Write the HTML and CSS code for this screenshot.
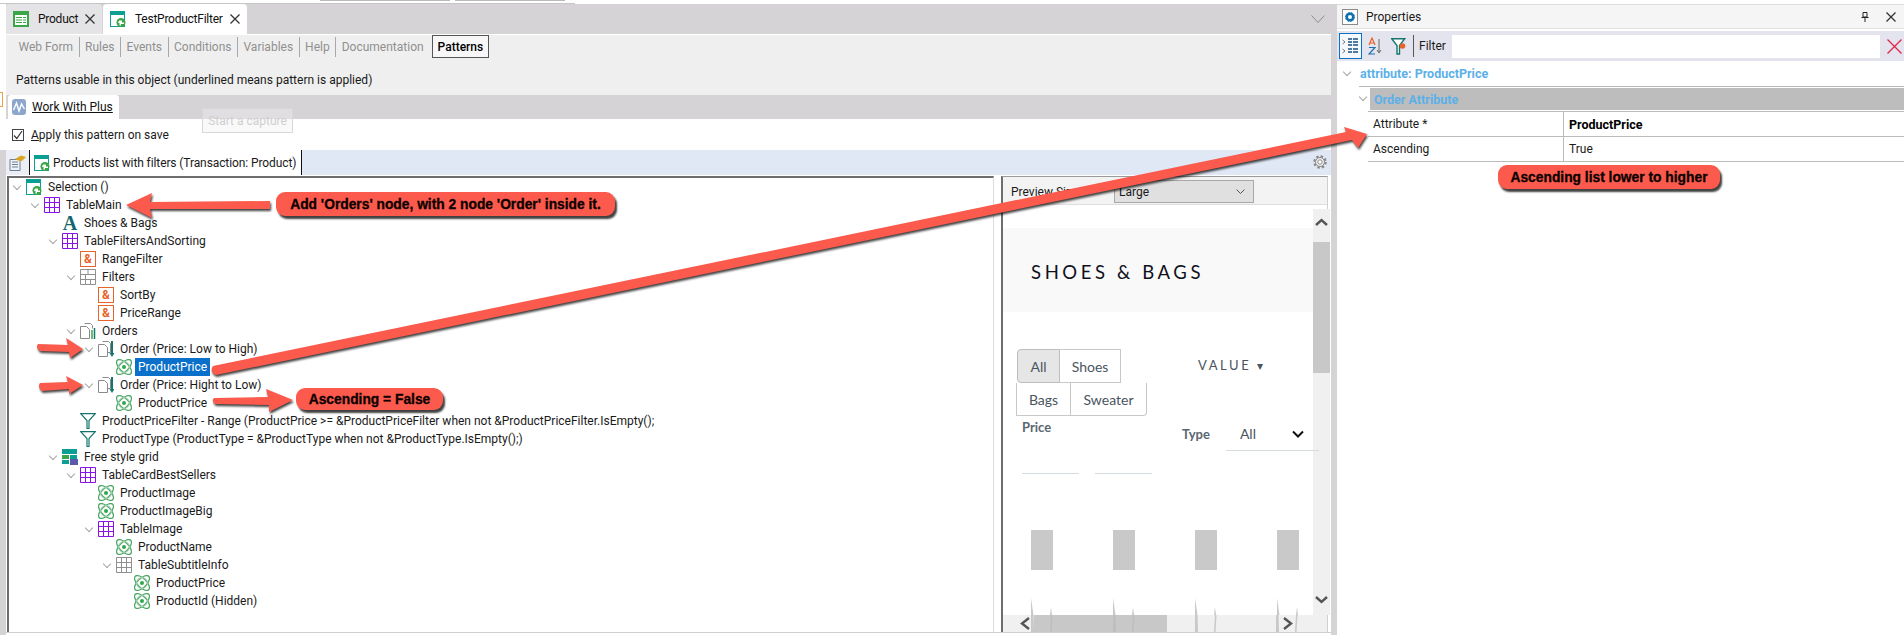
FILE: index.html
```html
<!DOCTYPE html>
<html lang="en">
<head>
    <meta charset="UTF-8">
    <title>TestProductFilter - Patterns</title>
    <link rel="stylesheet" href="styles.css">
</head>
<body>

<svg class="defs" width="0" height="0">
    <symbol id="i-table" viewBox="0 0 16 16"><path d="M.5.5h15v15H.5zM5.5.5v15M10.5.5v15M.5 5.5h15M.5 10.5h15" fill="none" stroke="currentColor"/></symbol>
    <symbol id="i-filters" viewBox="0 0 16 16"><path d="M.5.5h15v15H.5zM.5 5.5h15M.5 10.5h15M8 .5v5M5.5 5.5v10M10.5 10.5v5" fill="none" stroke="#8f8f8f"/></symbol>
    <symbol id="i-atom" viewBox="0 0 16 16">
        <g fill="none" stroke="#4ea866" stroke-width="1.3">
            <ellipse cx="8" cy="8" rx="9.500" ry="4.500" transform="rotate(45 8 8)"/>
            <ellipse cx="8" cy="8" rx="9.500" ry="4.500" transform="rotate(-45 8 8)"/>
            <circle cx="8" cy="8" r="5.500" stroke="#9ccfae" stroke-width="1"/>
        </g>
        <circle cx="8" cy="8" r="2" fill="#2fa84a"/>
    </symbol>
    <symbol id="i-funnel" viewBox="0 0 16 16"><path d="M.7.7h14.6L9 7.5V15.5H7V7.5z" fill="#fff" stroke="#14766c" stroke-width="1.2"/></symbol>
    <symbol id="i-web" viewBox="0 0 16 16">
        <rect x=".5" y=".5" width="14" height="15" fill="#fff" stroke="#0a9f92"/>
        <rect x="0" y="0" width="15" height="4" fill="#0a9f92"/>
        <circle cx="11" cy="11.5" r="4.5" fill="#3aa648"/>
        <path d="M9 9.5h3v2h2v1.5h-3v1.5H9.500v-2.500H8z" fill="#fff"/>
    </symbol>
    <symbol id="i-order" viewBox="0 0 16 16">
        <path d="M4.500.5h6l2 2v9h-4" fill="#fff" stroke="#8a8a8a"/>
        <path d="M.5 3.500h6l3 3v9h-9z" fill="#fff" stroke="#8a8a8a"/>
        <path d="M14 0v13" stroke="#14766c" stroke-width="2"/>
        <path d="M11.500 12h5l-2.500 4z" fill="#14766c"/>
    </symbol>
    <symbol id="i-orders" viewBox="0 0 16 16">
        <path d="M4.500.5h6l2 2v3" fill="#fff" stroke="#8a8a8a"/>
        <path d="M.5 3.500h6l3 3v9h-9z" fill="#fff" stroke="#8a8a8a"/>
        <path d="M12 7v9" stroke="#3aa648" stroke-width="1.500"/>
        <path d="M14.500 5v11" stroke="#14766c" stroke-width="1.500"/>
    </symbol>
    <symbol id="i-close" viewBox="0 0 10 10"><path d="M.5.5l9 9M9.500.5l-9 9" fill="none" stroke="#333" stroke-width="1.300"/></symbol>
</svg>

<div class="topstrip"></div>

<div class="app">
    <div class="main">
        <div class="tabbar">
            <div class="doc-tab inactive">
                <svg class="icon" viewBox="0 0 16 16"><rect width="16" height="16" fill="#3aa648"/><rect x="2" y="4" width="12" height="10" fill="#fff"/><path d="M3 6h6v1H3zM3 8.500h6v1H3zM3 11h6v1H3zM10 6h3v1h-3zM10 8.500h3v1h-3zM10 11h3v1h-3z" fill="#3aa648"/></svg>
                <span class="doc-name">Product</span>
                <svg class="close"><use href="#i-close"/></svg>
            </div>
            <div class="doc-tab active">
                <svg class="icon"><use href="#i-web"/></svg>
                <span class="doc-name">TestProductFilter</span>
                <svg class="close"><use href="#i-close"/></svg>
            </div>
            <svg class="tabbar-chevron" width="14" height="8" viewBox="0 0 14 8"><path d="M.5.5 7 7.500 13.500.5" fill="none" stroke="#8c8c8c"/></svg>
        </div>

        <div class="toolrow">
            <div class="subtabs">
                <span class="subtab">Web Form</span>
                <span class="subtab">Rules</span>
                <span class="subtab">Events</span>
                <span class="subtab">Conditions</span>
                <span class="subtab">Variables</span>
                <span class="subtab">Help</span>
                <span class="subtab last">Documentation</span>
                <span class="subtab current">Patterns</span>
            </div>
            <p class="usable">Patterns usable in this object (underlined means pattern is applied)</p>
        </div>

        <div class="patternbar">
            <div class="pattern-tab">
                <svg class="wave" width="14" height="16" viewBox="0 0 14 16"><rect width="14" height="16" rx="3" fill="#8ca6cc"/><path d="M1.500 11 4.500 4l2.500 8 2.500-7 3 5" fill="none" stroke="#fff" stroke-width="1.400"/></svg>
                <span class="pattern-name">Work With Plus</span>
            </div>
        </div>

        <div class="applyrow">
            <span class="checkbox"><svg width="10" height="10" viewBox="0 0 10 10"><path d="M1 5.500 3.800 8.500 9 1" fill="none" stroke="#333" stroke-width="1.200"/></svg></span>
            <span><u>A</u>pply this pattern on save</span>
        </div>

        <div class="lower">
            <div class="instancebar">
                <div class="instance-tool">
                    <svg width="17" height="16" viewBox="0 0 17 16"><path d="M1 4.500h10v11H1z" fill="#eef2f8" stroke="#6f7f95"/><path d="M3 7h6M3 9.500h6M3 12h6" stroke="#6f7f95"/><path d="M6 4 12 .5l5 1.500-4 4-4-.5z" fill="#d9a520"/></svg>
                </div>
                <div class="instance-tab">
                    <svg class="icon"><use href="#i-web"/></svg>
                    <span class="instance-name">Products list with filters (Transaction: Product)</span>
                </div>
                <svg class="gear" width="16" height="16" viewBox="0 0 16 16"><circle cx="8" cy="8" r="5.500" fill="none" stroke="#8a8a8a" stroke-width="2.600" stroke-dasharray="2.400 1.900"/><circle cx="8" cy="8" r="4.500" fill="#eee" stroke="#8a8a8a"/><circle cx="8" cy="8" r="2.200" fill="#fff" stroke="#8a8a8a"/></svg>
            </div>

            <div class="workspace">
                <div class="tree">
                    <div class="row l0"><span class="chev"></span><svg class="icon"><use href="#i-web"/></svg><span class="label">Selection ()</span></div>
                    <div class="row l1"><span class="chev"></span><svg class="icon purple"><use href="#i-table"/></svg><span class="label">TableMain</span></div>
                    <div class="row l2"><span class="chev none"></span><span class="icon font-a">A</span><span class="label">Shoes &amp; Bags</span></div>
                    <div class="row l2"><span class="chev"></span><svg class="icon purple"><use href="#i-table"/></svg><span class="label">TableFiltersAndSorting</span></div>
                    <div class="row l3"><span class="chev none"></span><span class="icon amp">&amp;</span><span class="label">RangeFilter</span></div>
                    <div class="row l3"><span class="chev"></span><svg class="icon"><use href="#i-filters"/></svg><span class="label">Filters</span></div>
                    <div class="row l4"><span class="chev none"></span><span class="icon amp">&amp;</span><span class="label">SortBy</span></div>
                    <div class="row l4"><span class="chev none"></span><span class="icon amp">&amp;</span><span class="label">PriceRange</span></div>
                    <div class="row l3"><span class="chev"></span><svg class="icon"><use href="#i-orders"/></svg><span class="label">Orders</span></div>
                    <div class="row l4"><span class="chev"></span><svg class="icon"><use href="#i-order"/></svg><span class="label">Order (Price: Low to High)</span></div>
                    <div class="row l5"><span class="chev none"></span><svg class="icon"><use href="#i-atom"/></svg><span class="label selected">ProductPrice</span></div>
                    <div class="row l4"><span class="chev"></span><svg class="icon"><use href="#i-order"/></svg><span class="label">Order (Price: Hight to Low)</span></div>
                    <div class="row l5"><span class="chev none"></span><svg class="icon"><use href="#i-atom"/></svg><span class="label">ProductPrice</span></div>
                    <div class="row l3"><span class="chev none"></span><svg class="icon"><use href="#i-funnel"/></svg><span class="label">ProductPriceFilter - Range (ProductPrice &gt;= &amp;ProductPriceFilter when not &amp;ProductPriceFilter.IsEmpty();</span></div>
                    <div class="row l3"><span class="chev none"></span><svg class="icon"><use href="#i-funnel"/></svg><span class="label">ProductType (ProductType = &amp;ProductType when not &amp;ProductType.IsEmpty();)</span></div>
                    <div class="row l2"><span class="chev"></span>
                        <svg class="icon" viewBox="0 0 16 16"><rect width="15" height="5" fill="#0a9f92"/><rect y="6" width="7" height="4" fill="#3aa648"/><rect x="8" y="6" width="7" height="4" fill="#0a9f92"/><rect y="11" width="7" height="4" fill="#0a9f92"/><rect x="8" y="10" width="8" height="6" fill="#5a5aa8"/></svg>
                        <span class="label">Free style grid</span></div>
                    <div class="row l3"><span class="chev"></span><svg class="icon purple"><use href="#i-table"/></svg><span class="label">TableCardBestSellers</span></div>
                    <div class="row l4"><span class="chev none"></span><svg class="icon"><use href="#i-atom"/></svg><span class="label">ProductImage</span></div>
                    <div class="row l4"><span class="chev none"></span><svg class="icon"><use href="#i-atom"/></svg><span class="label">ProductImageBig</span></div>
                    <div class="row l4"><span class="chev"></span><svg class="icon purple"><use href="#i-table"/></svg><span class="label">TableImage</span></div>
                    <div class="row l5"><span class="chev none"></span><svg class="icon"><use href="#i-atom"/></svg><span class="label">ProductName</span></div>
                    <div class="row l5"><span class="chev"></span><svg class="icon gray"><use href="#i-table"/></svg><span class="label">TableSubtitleInfo</span></div>
                    <div class="row l6"><span class="chev none"></span><svg class="icon"><use href="#i-atom"/></svg><span class="label">ProductPrice</span></div>
                    <div class="row l6"><span class="chev none"></span><svg class="icon"><use href="#i-atom"/></svg><span class="label">ProductId (Hidden)</span></div>
                </div>

                <div class="preview">
                    <div class="preview-tools">
                        <span class="preview-size">Preview Size:</span>
                        <div class="size-select"><span>Large</span>
                            <svg width="9" height="6" viewBox="0 0 9 6"><path d="M.5.5 4.500 4.500 8.500.5" fill="none" stroke="#555"/></svg>
                        </div>
                    </div>
                    <div class="preview-body">
                        <div class="page">
                            <div class="hero">SHOES &amp; BAGS</div>
                            <div class="filter-top">
                                <div class="seg">
                                    <div class="seg-row">
                                        <span class="seg-btn on">All</span>
                                        <span class="seg-btn shoes">Shoes</span>
                                    </div>
                                    <div class="seg-row second">
                                        <span class="seg-btn bags">Bags</span>
                                        <span class="seg-btn sweater">Sweater</span>
                                    </div>
                                </div>
                                <div class="value">VALUE <span class="value-caret">▾</span></div>
                            </div>
                            <div class="filter-bottom">
                                <div class="price">
                                    <div class="price-label">Price</div>
                                    <div class="price-inputs"><span class="price-input"></span><span class="price-input"></span></div>
                                </div>
                                <div class="type">
                                    <span class="type-label">Type</span>
                                    <div class="type-select">
                                        <span>All</span>
                                        <svg width="12" height="8" viewBox="0 0 12 8"><path d="M1 1.500 6 6.500 11 1.500" fill="none" stroke="#111" stroke-width="2"/></svg>
                                    </div>
                                </div>
                            </div>
                            <div class="thumbs">
                                <div class="thumb-col"><span class="thumb"></span><svg class="sliver" width="22" height="17" viewBox="0 0 22 17"><path d="M0 0 2.500 17H0zM20 9l1 8h-2z" fill="#c9c9c9"/></svg></div>
                                <div class="thumb-col"><span class="thumb"></span><svg class="sliver" width="22" height="17" viewBox="0 0 22 17"><path d="M0 0 2.500 17H0zM20 9l1 8h-2z" fill="#c9c9c9"/></svg></div>
                                <div class="thumb-col"><span class="thumb"></span><svg class="sliver" width="22" height="17" viewBox="0 0 22 17"><path d="M0 0 2.500 17H0zM20 9l1 8h-2z" fill="#c9c9c9"/></svg></div>
                                <div class="thumb-col"><span class="thumb"></span><svg class="sliver" width="22" height="17" viewBox="0 0 22 17"><path d="M0 0 2.500 17H0zM20 9l1 8h-2z" fill="#c9c9c9"/></svg></div>
                            </div>
                        </div>
                        <div class="vscroll">
                            <svg class="scroll-btn" width="17" height="24" viewBox="0 0 17 24"><path d="M3 16 8.500 11 14 16" fill="none" stroke="#555" stroke-width="2.400"/></svg>
                            <div class="vthumb"></div>
                            <svg class="scroll-btn end" width="17" height="24" viewBox="0 0 17 24"><path d="M3 6 8.500 11 14 6" fill="none" stroke="#555" stroke-width="2.400"/></svg>
                        </div>
                    </div>
                    <div class="hscroll">
                        <svg class="scroll-arrow" width="17" height="17" viewBox="0 0 17 17"><path d="M13 3 6 8.500 13 14" fill="none" stroke="#555" stroke-width="2.400"/></svg>
                        <div class="hthumb"></div>
                        <svg class="scroll-arrow end" width="17" height="17" viewBox="0 0 17 17"><path d="M4 3 11 8.500 4 14" fill="none" stroke="#555" stroke-width="2.400"/></svg>
                    </div>
                </div>
            </div>
        </div>
    </div>

    <div class="props">
        <div class="props-head">
            <span class="props-icon"><svg width="10" height="10" viewBox="0 0 10 10"><circle cx="5" cy="5" r="3.300" fill="none" stroke="#0f6fb0" stroke-width="2.600"/><circle cx="5" cy="5" r="4.600" fill="none" stroke="#0f6fb0" stroke-dasharray="1.400 1.400"/></svg></span>
            <span class="props-title">Properties</span>
            <svg class="pin" width="8" height="10" viewBox="0 0 8 10"><path d="M2 .5h4v4.500H2zM.5 5.500h7M4 5.500V10" fill="none" stroke="#222"/></svg>
            <svg class="props-close"><use href="#i-close"/></svg>
        </div>
        <div class="props-tools">
            <span class="tool-btn on">
                <svg width="17" height="18" viewBox="0 0 17 18"><path d="M.5 3 3 5 .5 7M.5 12 3 14 .5 16" fill="none" stroke="#777"/><path d="M6 2h4M11 2h5M6 5h4M11 5h5M6 8h4M11 8h5M6 12h4M11 12h5M6 15h4M11 15h5" stroke="#1a4f84" stroke-width="1.600"/></svg>
            </span>
            <span class="tool-btn">
                <svg width="14" height="18" viewBox="0 0 14 18"><path d="M1 8 4 1l3 7M2 6h4" fill="none" stroke="#e8632a" stroke-width="1.200"/><path d="M1 10.500h6l-6 6.500h6" fill="none" stroke="#1a6fb0" stroke-width="1.200"/><path d="M11 2v13M9 13l2 3 2-3" fill="none" stroke="#666"/></svg>
            </span>
            <span class="tool-btn">
                <svg width="16" height="17" viewBox="0 0 16 17"><path d="M.7.7h13L8.500 7.500V16H6V7.500z" fill="#fff" stroke="#14766c" stroke-width="1.400"/><circle cx="11.500" cy="8" r="2.800" fill="#e8632a"/></svg>
            </span>
            <span class="tool-sep"></span>
            <span class="filter-label">Filter</span>
            <span class="filter-input"></span>
            <svg class="filter-clear" width="15" height="15" viewBox="0 0 15 15"><path d="M.5.5 14.500 14.500M14.500.5.500 14.500" stroke="#e0244a" stroke-width="1.300"/></svg>
        </div>
        <div class="attr-head"><span class="chev"></span><span class="attr-title">attribute: ProductPrice</span></div>
        <div class="group-head"><span class="chev"></span><span class="group-title">Order Attribute</span></div>
        <div class="prop-table">
            <div class="prop-row"><span class="prop-name">Attribute *</span><span class="prop-value strong">ProductPrice</span></div>
            <div class="prop-row"><span class="prop-name">Ascending</span><span class="prop-value">True</span></div>
        </div>
    </div>
</div>

<!-- annotations pasted over the screenshot -->
<span class="edge-mark"></span>
<div class="capture">Start a capture</div>
<svg class="arrows" width="1904" height="635" viewBox="0 0 1904 635">
    <path d="M270 201 L150 202 L152 193 L126 205 L152 218 L150 209 L270 209 Z"/>
    <path d="M213 366 L1346 132 L1344 127 L1367 134 L1358 148 L1352 140 L216 375 Q209 372 213 366 Z"/>
    <path d="M38 344 L68 345 L66 338 L83 349 L70 358 L69 352 L40 351 Q35 348 38 344 Z"/>
    <path d="M40 383 L68 382 L66 376 L83 385 L69 394 L69 389 L42 391 Q37 387 40 383 Z"/>
    <path d="M214 398 L268 397 L266 389 L293 400 L269 412 L269 405 L215 404 Q211 401 214 398 Z"/>
</svg>
<svg class="scroll-slivers" width="290" height="17" viewBox="0 0 290 17">
    <path d="M0 0h2.500L3 17H0zM20 0h1.500l-1 17H19zM82 0h2.500L85 17h-3zM102 0h1.500l-1 17H101zM164 0h2.500l.5 17h-3zM184 0h1.500l-1 17H183zM245 0h2.500l.5 17h-3zM265 0h1.500l-1 17H264z" fill="#bbb" opacity=".75"/>
</svg>
<div class="callout c-orders">Add 'Orders' node, with 2 node 'Order' inside it.</div>
<div class="callout c-false">Ascending = False</div>
<div class="callout c-list">Ascending list lower to higher</div>

</body>
</html>
```

FILE: styles.css
```css
html, body {
    margin: 0;
    padding: 0;
}

body {
    position: relative;
    width: 1904px;
    height: 635px;
    overflow: hidden;
    background-color: #ffffff;
    font-family: Roboto, "Noto Sans", sans-serif;
    font-size: 12px;
    color: #1a1a1a;
}

.defs {
    position: absolute;
}

/* leftovers of the window behind, top edge of the capture */
.topstrip {
    height: 4px;
    background-image:
        linear-gradient(#b9b9b9, #b9b9b9),
        linear-gradient(#b9b9b9, #b9b9b9),
        linear-gradient(#c6c6c6, #c6c6c6);
    background-size: 130px 1px, 110px 1px, 575px 1px;
    background-position: 320px 0, 455px 0, 0 3px;
    background-repeat: no-repeat;
}

.app {
    display: flex;
    height: 631px;
}

.main {
    width: 1331px;
    flex: none;
    display: flex;
    flex-direction: column;
}

.icon {
    width: 16px;
    height: 16px;
    flex: none;
    display: block;
}

/* document tabs */
.tabbar {
    height: 30px;
    margin-left: 6px;
    display: flex;
    align-items: stretch;
    gap: 1px;
    background-color: #d5d3d6;
}

.doc-tab {
    display: flex;
    align-items: center;
    padding-left: 7px;
    border-radius: 4px 4px 0 0;
    box-sizing: border-box;
}

.doc-tab.inactive {
    width: 96px;
    background-color: #e4e3e5;
}

.doc-tab.active {
    width: 144px;
    background-color: #ffffff;
}

.doc-name {
    margin-left: 9px;
    color: #111;
    letter-spacing: -0.25px;
}

.close {
    width: 10px;
    height: 10px;
    margin-left: auto;
    margin-right: 7px;
}

.tabbar-chevron {
    margin: 11px 6px 0 auto;
}

/* object parts */
.toolrow {
    height: 61px;
    margin-left: 6px;
    background-color: #efefef;
    border-top: 1px solid #ffffff;
    box-sizing: border-box;
}

.subtabs {
    display: flex;
    align-items: stretch;
    height: 23px;
    padding-left: 7px;
}

.subtab {
    display: flex;
    align-items: center;
    padding: 0 5.5px;
    color: #8f8f8f;
    border-right: 1px solid #a8a8a8;
    margin: 2px 0 1px;
}

.subtab.last {
    border-right: none;
    padding-right: 8px;
}

.subtab.current {
    margin: 0;
    color: #000;
    font-weight: 500;
    border: 1px solid #555;
    padding: 0 5px;
    background-color: #f7f7f7;
}

.usable {
    margin: 14px 0 0 10px;
    line-height: 16px;
}

.patternbar {
    height: 24px;
    margin-left: 6px;
    background-color: #d5d3d6;
}

.pattern-tab {
    width: 111px;
    height: 24px;
    margin-left: 2px;
    display: flex;
    align-items: center;
    gap: 6px;
    padding-left: 4px;
    background-color: #ffffff;
    border-radius: 3px 3px 0 0;
    box-sizing: border-box;
}

.pattern-name {
    text-decoration: underline;
    color: #111;
}

.applyrow {
    height: 31px;
    margin-left: 12px;
    display: flex;
    align-items: center;
    gap: 7px;
}

.checkbox {
    width: 12px;
    height: 12px;
    border: 1px solid #444;
    box-sizing: border-box;
    display: flex;
    align-items: center;
    justify-content: center;
}

.lower {
    flex: 1;
    min-height: 0;
    border-left: 6px solid #d5d3d6;
    display: flex;
    flex-direction: column;
}

.instancebar {
    height: 25px;
    flex: none;
    display: flex;
    align-items: stretch;
    background-color: #e1e8f5;
}

.instance-tool {
    width: 24px;
    display: flex;
    align-items: center;
    justify-content: center;
    background-color: #ebeef4;
    border-right: 1px solid #111;
    box-sizing: border-box;
}

.instance-tab {
    width: 272px;
    display: flex;
    align-items: center;
    gap: 3px;
    padding-left: 4px;
    background-color: #ffffff;
    border-right: 1px solid #111;
    box-sizing: border-box;
}

.instance-name {
    letter-spacing: -0.1px;
}

.gear {
    margin: 4px 3px 0 auto;
}

.workspace {
    flex: 1;
    min-height: 0;
    display: flex;
    gap: 7px;
    padding-top: 1px;
    padding-right: 3px;
    border-bottom: 1px solid #cfcfcf;
    margin-bottom: 2px;
}

/* pattern tree */
.tree {
    width: 987px;
    flex: none;
    margin-left: 1px;
    box-sizing: border-box;
    border-top: 2px solid #6e6e6e;
    border-left: 2px solid #6e6e6e;
    border-right: 1px solid #dcdcdc;
}

.row {
    display: flex;
    align-items: center;
    height: 18px;
    white-space: nowrap;
}

.l0 { padding-left: 4px; }
.l1 { padding-left: 22px; }
.l2 { padding-left: 40px; }
.l3 { padding-left: 58px; }
.l4 { padding-left: 76px; }
.l5 { padding-left: 94px; }
.l6 { padding-left: 112px; }

.chev {
    width: 9px;
    height: 9px;
    flex: none;
    margin-right: 4px;
    position: relative;
}

.chev::after {
    content: "";
    position: absolute;
    left: 1px;
    top: 0;
    width: 5px;
    height: 5px;
    border-right: 1px solid #a6a6a6;
    border-bottom: 1px solid #a6a6a6;
    transform: rotate(45deg);
}

.chev.none::after {
    display: none;
}

.label {
    margin-left: 4px;
    padding: 0 2px;
    line-height: 18px;
}

.label.selected {
    margin-left: 3px;
    padding: 0 3px;
    background-color: #0a70c9;
    color: #ffffff;
}

.purple { color: #8a12e8; }
.gray { color: #8f8f8f; }

.font-a {
    font-family: "Liberation Serif", serif;
    font-weight: bold;
    font-size: 20px;
    line-height: 16px;
    color: #14666c;
    text-align: center;
}

.amp {
    border: 1px solid #e8632a;
    box-sizing: border-box;
    color: #e8632a;
    font-weight: bold;
    font-size: 12px;
    line-height: 14px;
    text-align: center;
}

/* preview */
.preview {
    flex: 1;
    min-width: 0;
    display: flex;
    flex-direction: column;
    border-top: 1px solid #9a9a9a;
    border-left: 2px solid #6e6e6e;
    border-right: 1px solid #cfcfcf;
    box-sizing: border-box;
}

.preview-tools {
    height: 28px;
    flex: none;
    display: flex;
    align-items: center;
    background-color: #f3f3f3;
    border-bottom: 1px solid #dedede;
    box-sizing: border-box;
    padding: 2px 0 0 8px;
}

.preview-size {
    width: 103px;
}

.size-select {
    width: 140px;
    height: 23px;
    display: flex;
    align-items: center;
    justify-content: space-between;
    padding: 0 8px 0 4px;
    background-color: #e0e0e0;
    border: 1px solid #a8a8a8;
    box-sizing: border-box;
}

.preview-body {
    flex: 1;
    min-height: 0;
    display: flex;
    background-color: #ffffff;
}

.page {
    width: 310px;
    flex: none;
    font-family: Lato, "Noto Sans", sans-serif;
    color: #4a5560;
}

.hero {
    height: 84px;
    margin-top: 23px;
    padding: 3px 0 0 28px;
    box-sizing: border-box;
    display: flex;
    align-items: center;
    background-color: #f9f9f9;
    color: #10101c;
    font-size: 18.5px;
    letter-spacing: 3.6px;
}

.filter-top {
    display: flex;
    height: 68px;
    margin-top: 37px;
}

.seg {
    width: 181px;
    flex: none;
    padding-left: 13px;
    box-sizing: border-box;
    font-size: 14px;
}

.seg-row {
    display: flex;
    height: 34px;
    margin-left: 1px;
}

.seg-row.second {
    height: 33px;
    margin-left: 0;
}

.seg-btn {
    display: flex;
    align-items: center;
    justify-content: center;
    box-sizing: border-box;
    border: 1px solid #c8c8c8;
}

.seg-btn.on {
    width: 43px;
    background-color: #e6e6e6;
    border-radius: 4px 0 0 4px;
    border-color: #bdbdbd;
}

.shoes {
    width: 61px;
    border-left: none;
}

.bags {
    width: 55px;
    border-top: none;
}

.sweater {
    width: 76px;
    border-top: none;
    border-left: none;
    border-radius: 0 0 4px 0;
}

.value {
    padding-top: 8px;
    padding-left: 14px;
    font-size: 13px;
    letter-spacing: 2.600px;
}

.value-caret {
    letter-spacing: 0;
    font-size: 12px;
}

.filter-bottom {
    display: flex;
    height: 74px;
}

.price {
    width: 179px;
    flex: none;
    padding-left: 19px;
    box-sizing: border-box;
}

.price-label,
.type-label {
    font-weight: bold;
    font-size: 13px;
    color: #5a6672;
}

.price-label {
    margin-top: 2px;
    line-height: 16px;
}

.price-inputs {
    display: flex;
    gap: 16px;
    margin-top: 38px;
}

.price-input {
    width: 57px;
    border-bottom: 1px solid #d5dce0;
}

.type {
    display: flex;
    gap: 16px;
    height: 34px;
}

.type-label {
    line-height: 34px;
}

.type-select {
    position: relative;
    width: 93px;
    height: 34px;
    display: flex;
    align-items: center;
    justify-content: space-between;
    padding: 0 15px 0 14px;
    box-sizing: border-box;
    border-bottom: 1px solid #d5dce0;
    font-size: 14px;
}

.thumbs {
    display: flex;
    padding-top: 39px;
    padding-left: 28px;
    gap: 60px;
}

.thumb-col {
    width: 22px;
}

.thumb {
    display: block;
    width: 22px;
    height: 40px;
    background-color: #c9c9c9;
}

.sliver {
    display: block;
    margin-top: 28px;
}

.vscroll {
    flex: 1;
    margin-top: 4px;
    display: flex;
    flex-direction: column;
    background-color: #f0f0f0;
}

.scroll-btn {
    display: block;
    flex: none;
}

.scroll-btn.end {
    margin-top: auto;
}

.vthumb {
    height: 131px;
    margin-top: 9px;
    background-color: #c8c8c8;
}

.hscroll {
    height: 17px;
    flex: none;
    display: flex;
    background-color: #f0f0f0;
}

.scroll-arrow {
    margin-left: 13px;
}

.hthumb {
    width: 133px;
    margin-left: 1px;
    background-color: #c8c8c8;
}

.scroll-arrow.end {
    margin-left: auto;
    margin-right: 30px;
}

/* properties panel */
.props {
    flex: 1;
    min-width: 0;
    border-left: 6px solid #d5d3d6;
}

.props-head {
    height: 25px;
    display: flex;
    align-items: center;
    padding-left: 5px;
    background-color: #f5f5f5;
    border-top: 1px solid #dcdcdc;
    border-bottom: 1px solid #e2e2e2;
    box-sizing: border-box;
}

.props-icon {
    width: 16px;
    height: 16px;
    display: flex;
    align-items: center;
    justify-content: center;
    background-color: #ffffff;
    border: 1px solid #8a8a8a;
    box-sizing: border-box;
}

.props-title {
    margin-left: 8px;
}

.pin {
    margin-left: auto;
}

.props-close {
    width: 10px;
    height: 10px;
    margin: 0 8px 0 17px;
}

.props-tools {
    height: 30px;
    margin-top: 2px;
    display: flex;
    align-items: center;
    padding-left: 2px;
    background-color: #e4e4ee;
}

.tool-btn {
    width: 23px;
    height: 26px;
    display: flex;
    align-items: center;
    justify-content: center;
    box-sizing: border-box;
}

.tool-btn.on {
    border: 1px solid #0a70c9;
    background-color: #f5f8fc;
}

.tool-btn + .tool-btn {
    margin-left: 1px;
}

.tool-sep {
    width: 1px;
    height: 22px;
    margin-left: 3px;
    background-color: #555;
}

.filter-label {
    margin-left: 5px;
    width: 33px;
}

.filter-input {
    width: 428px;
    height: 23px;
    background-color: #ffffff;
}

.filter-clear {
    margin-left: 7px;
}

.attr-head {
    height: 25px;
    display: flex;
    align-items: center;
    padding-left: 6px;
}

.attr-title,
.group-title {
    font-weight: bold;
    font-size: 12.5px;
    color: #5cb0e8;
}

.attr-title {
    margin-left: 4px;
}

.attr-head .chev,
.group-head .chev {
    margin-right: 4px;
}

.group-head {
    height: 23px;
    margin-left: 22px;
    display: flex;
    align-items: center;
    border-top: 1px solid #b8b8b8;
    position: relative;
}

.group-title {
    flex: 1;
    align-self: stretch;
    display: flex;
    align-items: center;
    margin-top: 1px;
    margin-left: -2px;
    padding-left: 4px;
    background-color: #bdbdbd;
}

.prop-table {
    margin-left: 31px;
    margin-top: 1px;
    border-top: 1px solid #bbb;
}

.prop-row {
    display: flex;
    height: 25px;
    border-bottom: 1px solid #bbb;
    box-sizing: border-box;
}

.prop-name {
    width: 196px;
    padding-left: 5px;
    display: flex;
    align-items: center;
    border-right: 1px solid #bbb;
    box-sizing: border-box;
}

.prop-value {
    padding-left: 5px;
    display: flex;
    align-items: center;
}

.prop-value.strong {
    font-weight: bold;
    font-size: 12.5px;
    color: #000;
}

/* overlays */
.edge-mark {
    position: absolute;
    left: 0;
    top: 92px;
    width: 2px;
    height: 13px;
    border: 1px solid #f0a040;
    border-left: none;
}

.capture {
    position: absolute;
    left: 202px;
    top: 108px;
    width: 91px;
    height: 25px;
    box-sizing: border-box;
    display: flex;
    align-items: center;
    justify-content: center;
    border: 1px solid #d8d8d8;
    background-color: rgba(240, 240, 240, 0.4);
    color: #cfcfcf;
}

.arrows {
    position: absolute;
    left: 0;
    top: 0;
    pointer-events: none;
    filter: drop-shadow(1px 2px 1px rgba(0, 0, 0, 0.75));
}

.arrows path {
    fill: #fb5a4c;
}

.scroll-slivers {
    position: absolute;
    left: 1031px;
    top: 615px;
}

.callout {
    position: absolute;
    display: flex;
    align-items: center;
    justify-content: center;
    box-sizing: border-box;
    background-color: #fb5a4c;
    border-radius: 9px;
    box-shadow: 2px 3px 2px rgba(0, 0, 0, 0.75);
    font-family: "Liberation Sans", Arial, sans-serif;
    font-weight: bold;
    font-size: 13.800px;
    color: #0c0000;
    -webkit-text-stroke: 0.3px #0c0000;
    white-space: nowrap;
}

.c-orders {
    left: 276px;
    top: 192px;
    width: 339px;
    height: 24px;
}

.c-false {
    left: 296px;
    top: 388px;
    width: 147px;
    height: 22px;
}

.c-list {
    left: 1498px;
    top: 165px;
    width: 222px;
    height: 24px;
}
```
